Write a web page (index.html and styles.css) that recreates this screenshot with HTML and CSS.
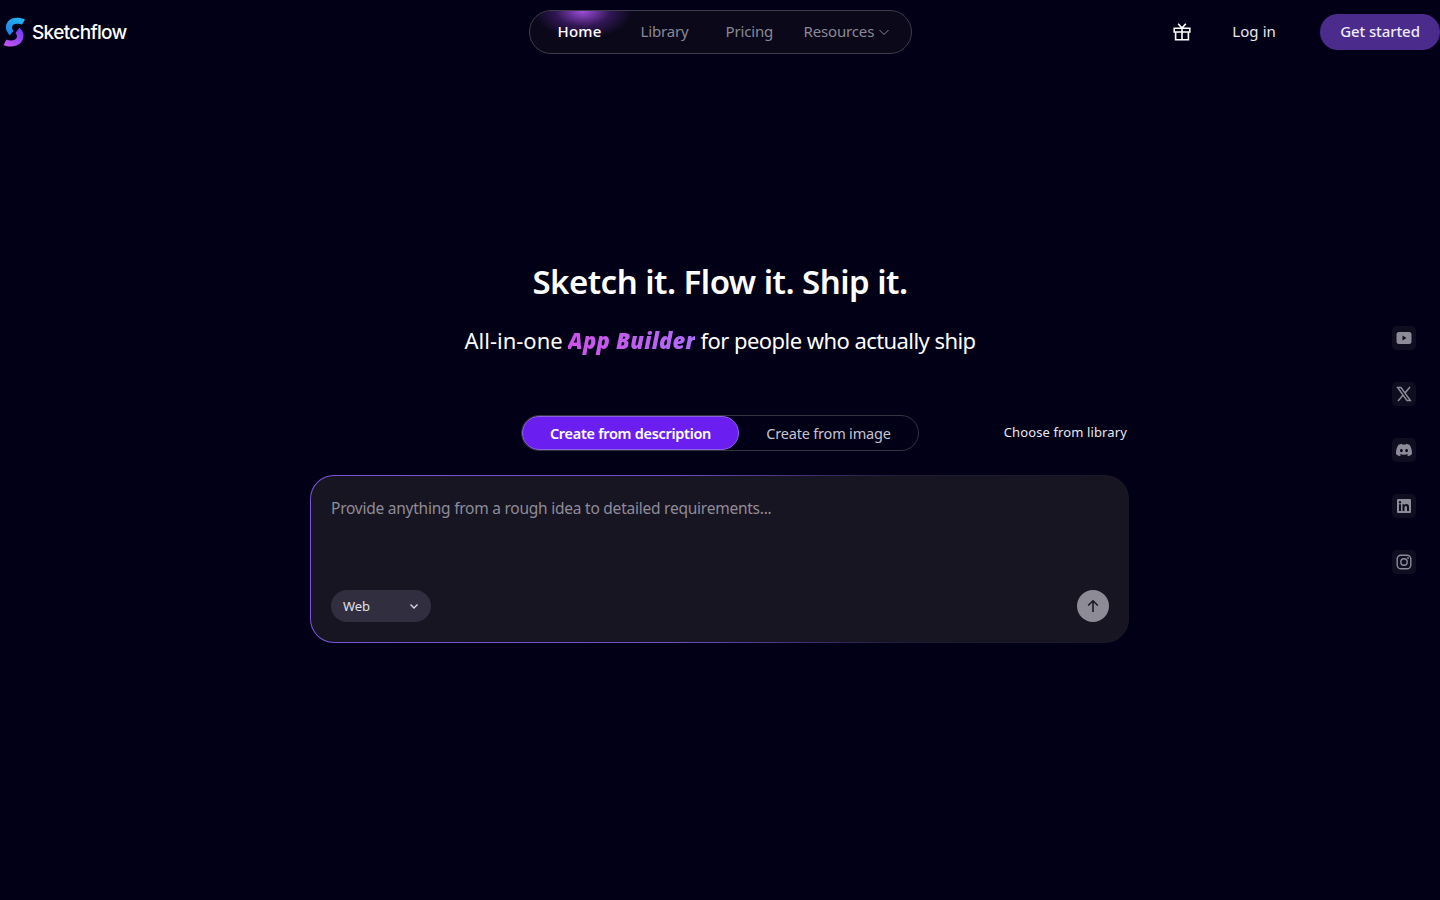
FILE: index.html
```html
<!DOCTYPE html>
<html lang="en">
<head>
<meta charset="utf-8">
<title>Sketchflow</title>
<link rel="stylesheet" href="styles.css">
</head>
<body>
<header class="header">
  <a class="brand">
    <svg class="brand-mark" viewBox="0 0 24 32" width="24" height="32">
      <defs>
        <linearGradient id="lgTop" x1="0.8" y1="0" x2="0.2" y2="1"><stop offset="0" stop-color="#22b8f5"/><stop offset="1" stop-color="#1f7ee8"/></linearGradient>
        <linearGradient id="lgBot" x1="0.8" y1="0" x2="0.1" y2="1"><stop offset="0" stop-color="#6a3df0"/><stop offset="1" stop-color="#c855f0"/></linearGradient>
      </defs>
      <path d="M23 3.5 C18 1 11 1 7.5 4 C3.5 7.5 3 12 5 15.5 L7.5 19.5 L11.5 15 C9.5 12.5 9.5 10 11.5 8.5 C14 7 18 8 20 8.5 Z" fill="url(#lgTop)"/>
      <path d="M1.5 29 C7 31.5 14 31 18 27.5 C22 24 22.5 18 20 14.5 L17.5 11.5 L13.5 17 C15.5 19.5 15.5 22 13 23.5 C10.5 25 7 24.5 4.5 23.5 Z" fill="url(#lgBot)"/>
    </svg>
    <span class="brand-name">Sketchflow</span>
  </a>
  <nav class="nav">
    <span class="nav-glow"></span>
    <a class="nav-link nav-home">Home</a>
    <a class="nav-link nav-library">Library</a>
    <a class="nav-link nav-pricing">Pricing</a>
    <a class="nav-link nav-resources">Resources
      <svg viewBox="0 0 12 12" width="12" height="12" fill="none" stroke="currentColor" stroke-width="1"><path d="M1.5 4 L6 8.5 L10.5 4"/></svg>
    </a>
  </nav>
  <div class="actions">
    <svg class="gift" viewBox="0 0 18 18" width="18" height="18" fill="none" stroke="#fff" stroke-width="1.6">
      <path d="M1.2 5.2 H16.8 V9 H1.2 Z M2.6 9 V16.8 H15.4 V9 M9 5.2 V16.8 M5.2 .8 L9 5 L12.8 .8"/>
    </svg>
    <a class="login">Log in</a>
    <a class="cta">Get started</a>
  </div>
</header>

<main class="hero">
  <h1 class="title">Sketch it. Flow it. Ship it.</h1>
  <p class="subtitle"><span class="sub-lead">All-in-one</span> <em class="accent">App Builder</em> for people who actually ship</p>
  <div class="mode-row">
    <span></span>
    <div class="tabs">
      <button class="tab tab-active">Create from description</button>
      <button class="tab">Create from image</button>
    </div>
    <a class="library-link">Choose from library</a>
  </div>
  <div class="card-border">
    <div class="card">
      <p class="placeholder">Provide anything from a rough idea to detailed requirements...</p>
      <div class="card-foot">
        <div class="select">
          <span>Web</span>
          <svg viewBox="0 0 12 12" width="12" height="12" fill="none" stroke="#d8d6de" stroke-width="1.4"><path d="M2.5 4.5 L6 8 L9.5 4.5"/></svg>
        </div>
        <button class="send" aria-label="Send">
          <svg viewBox="0 0 16 16" width="16" height="16" fill="none" stroke="#1a1723" stroke-width="1.6"><path d="M8 14 V3 M3.2 7.5 L8 2.8 L12.8 7.5"/></svg>
        </button>
      </div>
    </div>
  </div>
</main>

<aside class="social">
  <a class="social-item"><svg viewBox="0 0 16 16" width="16" height="16"><path fill="#8d8b98" fill-rule="evenodd" d="M3 2 H13 A2.5 2.5 0 0 1 15.5 4.5 V11.5 A2.5 2.5 0 0 1 13 14 H3 A2.5 2.5 0 0 1 .5 11.5 V4.5 A2.5 2.5 0 0 1 3 2 Z M6.5 5.5 V10.5 L10.5 8 Z"/></svg></a>
  <a class="social-item"><svg viewBox="0 0 16 16" width="16" height="16"><path fill="none" stroke="#8d8b98" stroke-width="1.4" d="M1.6 1.5 H5 L14.4 14.5 H11 Z"/><path fill="none" stroke="#8d8b98" stroke-width="1.5" d="M14 1 L9 7 M7 9.2 L2 15"/></svg></a>
  <a class="social-item"><svg viewBox="0 0 16 16" width="16" height="16"><path fill="#8d8b98" fill-rule="evenodd" d="M13.5 2.8 A13 13 0 0 0 10.3 1.8 L9.9 2.6 A12 12 0 0 0 6.1 2.6 L5.7 1.8 A13 13 0 0 0 2.5 2.8 C.4 6 -.2 9.1 .1 12.2 A13 13 0 0 0 4 14.2 L4.9 12.8 L3.5 12.1 L3.9 11.8 C6.5 13 9.5 13 12.1 11.8 L12.5 12.1 L11.1 12.8 L12 14.2 A13 13 0 0 0 15.9 12.2 C16.2 8.6 15.3 5.6 13.5 2.8 Z M5.4 10.2 C4.6 10.2 4 9.5 4 8.6 C4 7.7 4.6 7 5.4 7 C6.2 7 6.8 7.7 6.8 8.6 C6.8 9.5 6.2 10.2 5.4 10.2 Z M10.6 10.2 C9.8 10.2 9.2 9.5 9.2 8.6 C9.2 7.7 9.8 7 10.6 7 C11.4 7 12 7.7 12 8.6 C12 9.5 11.4 10.2 10.6 10.2 Z"/></svg></a>
  <a class="social-item"><svg viewBox="0 0 16 16" width="16" height="16"><path fill="#8d8b98" fill-rule="evenodd" d="M2 1 H14 A1 1 0 0 1 15 2 V14 A1 1 0 0 1 14 15 H2 A1 1 0 0 1 1 14 V2 A1 1 0 0 1 2 1 Z M3 6.3 V13 H5 V6.3 Z M4 3 A1.2 1.2 0 1 0 4 5.4 A1.2 1.2 0 1 0 4 3 Z M6.5 6.3 V13 H8.5 V9.5 C8.5 8.4 9 7.9 9.8 7.9 C10.6 7.9 11 8.4 11 9.5 V13 H13 V9 C13 7 12 6.1 10.5 6.1 C9.6 6.1 8.9 6.5 8.5 7.2 V6.3 Z"/></svg></a>
  <a class="social-item"><svg viewBox="0 0 16 16" width="16" height="16" fill="none" stroke="#8d8b98" stroke-width="1.4"><rect x="1.2" y="1.2" width="13.6" height="13.6" rx="3.8"/><circle cx="8" cy="8" r="3.2"/><circle cx="12" cy="4" r=".9" fill="#8d8b98" stroke="none"/></svg></a>
</aside>
</body>
</html>
```

FILE: styles.css
```css
* { box-sizing: border-box; }
html, body { margin: 0; height: 100%; }
body {
  position: relative;
  background: #020016;
  color: #fff;
  font-family: "Noto Sans", "Open Sans", sans-serif;
  min-height: 900px;
  overflow: hidden;
}
a { color: inherit; text-decoration: none; }

.header {
  display: grid;
  grid-template-columns: 1fr auto 1fr;
  align-items: center;
  height: 64px;
}
.brand { display: flex; align-items: center; gap: 6px; padding-left: 2px; }
.brand-mark { display: block; }
.brand-name {
  padding-top: 2px;
  font-family: Inter, sans-serif;
  font-size: 19px;
  font-weight: 500;
  letter-spacing: -0.65px;
  line-height: 32px;
}

.nav {
  position: relative;
  display: flex;
  align-items: center;
  width: 383px;
  height: 44px;
  padding-left: 28px;
  border: 1px solid #3e3c4c;
  border-radius: 22px;
  background: #0a0819;
  overflow: hidden;
  font-size: 15px;
}
.nav-glow {
  position: absolute;
  left: 3px;
  top: -28px;
  width: 100px;
  height: 56px;
  border-radius: 50%;
  background: radial-gradient(closest-side, rgba(175, 85, 240, .9), rgba(120, 50, 190, .35) 55%, rgba(90, 40, 160, 0) 100%);
}
.nav-link { position: relative; padding-bottom: 2px; color: #8b8996; white-space: nowrap; letter-spacing: -0.15px; }
.nav-home { color: #fff; font-weight: 500; width: 83px; letter-spacing: 0.2px; }
.nav-library { width: 85px; }
.nav-pricing { width: 78px; }
.nav-resources { display: flex; align-items: center; gap: 4px; }
.nav-resources svg { margin-top: 1px; }

.actions { display: flex; align-items: center; justify-content: flex-end; }
.gift { display: block; margin-right: 41px; }
.login { padding-bottom: 2px; font-size: 15px; color: #e9e8ee; margin-right: 44px; letter-spacing: 0.1px; }
.cta {
  display: flex;
  align-items: center;
  justify-content: center;
  width: 120px;
  height: 36px;
  padding-bottom: 2px;
  border-radius: 18px;
  background: #4b2b8c;
  color: #eeeaf6;
  font-size: 15px;
  font-weight: 500;
  letter-spacing: -0.1px;
}

.hero {
  display: flex;
  flex-direction: column;
  align-items: center;
  padding-top: 192px;
}
.title {
  margin: 0;
  font-size: 33px;
  line-height: 52px;
  font-weight: 600;
  letter-spacing: -0.52px;
}
.subtitle {
  margin: 16px 0 0;
  font-size: 22px;
  line-height: 32px;
  letter-spacing: -0.56px;
}
.sub-lead { letter-spacing: 0; }
.accent {
  font-weight: 900;
  font-style: italic;
  letter-spacing: 0.25px;
  background: linear-gradient(90deg, #d052ea, #b06cf5);
  -webkit-background-clip: text;
  background-clip: text;
  color: transparent;
}

.mode-row {
  display: grid;
  grid-template-columns: 1fr auto 1fr;
  align-items: center;
  width: 820px;
  margin-top: 59px;
}
.tabs {
  display: flex;
  width: 398px;
  height: 36px;
  border: 1px solid #35333f;
  border-radius: 18px;
}
.tab {
  flex: 1;
  height: 34px;
  padding: 0;
  border: 0;
  border-radius: 17px;
  background: none;
  color: #c6c5d0;
  font-family: inherit;
  font-size: 14.5px;
  letter-spacing: -0.2px;
}
.tab-active {
  flex: 0 0 217px;
  border: 1px solid #8c62e0;
  background: #6a1ff0;
  color: #fff;
  font-weight: 600;
  letter-spacing: -0.3px;
}
.library-link {
  justify-self: end;
  padding: 0 3px 2px 0;
  font-size: 13px;
  color: #e9e8ee;
  letter-spacing: 0.12px;
}

.card-border {
  width: 819px;
  height: 168px;
  margin: 24px 1px 0 0;
  padding: 1px;
  border-radius: 24px;
  background: linear-gradient(90deg, #7a55d8 0%, #6d4cc4 45%, #1f1a38 72%, #1a1628 100%);
}
.card {
  display: flex;
  flex-direction: column;
  justify-content: space-between;
  height: 100%;
  padding: 20px 19px 20px 20px;
  border-radius: 23px;
  background: #181522;
}
.placeholder {
  margin: 0;
  font-size: 15.5px;
  line-height: 24px;
  color: #8e8c98;
  letter-spacing: -0.24px;
}
.card-foot { display: flex; align-items: center; justify-content: space-between; }
.select {
  display: flex;
  align-items: center;
  justify-content: space-between;
  width: 100px;
  height: 32px;
  padding: 0 11px 0 12px;
  border-radius: 16px;
  background: #312e40;
  color: #e2e1e8;
  font-size: 13px;
  letter-spacing: -0.1px;
}
.send {
  display: flex;
  align-items: center;
  justify-content: center;
  width: 32px;
  height: 32px;
  padding: 0;
  border: 0;
  border-radius: 50%;
  background: #8d8b96;
}

.social {
  position: absolute;
  top: 326px;
  right: 24px;
  display: flex;
  flex-direction: column;
  gap: 32px;
}
.social-item {
  display: flex;
  align-items: center;
  justify-content: center;
  width: 24px;
  height: 24px;
  border-radius: 5px;
  background: #0f0d20;
}
```
